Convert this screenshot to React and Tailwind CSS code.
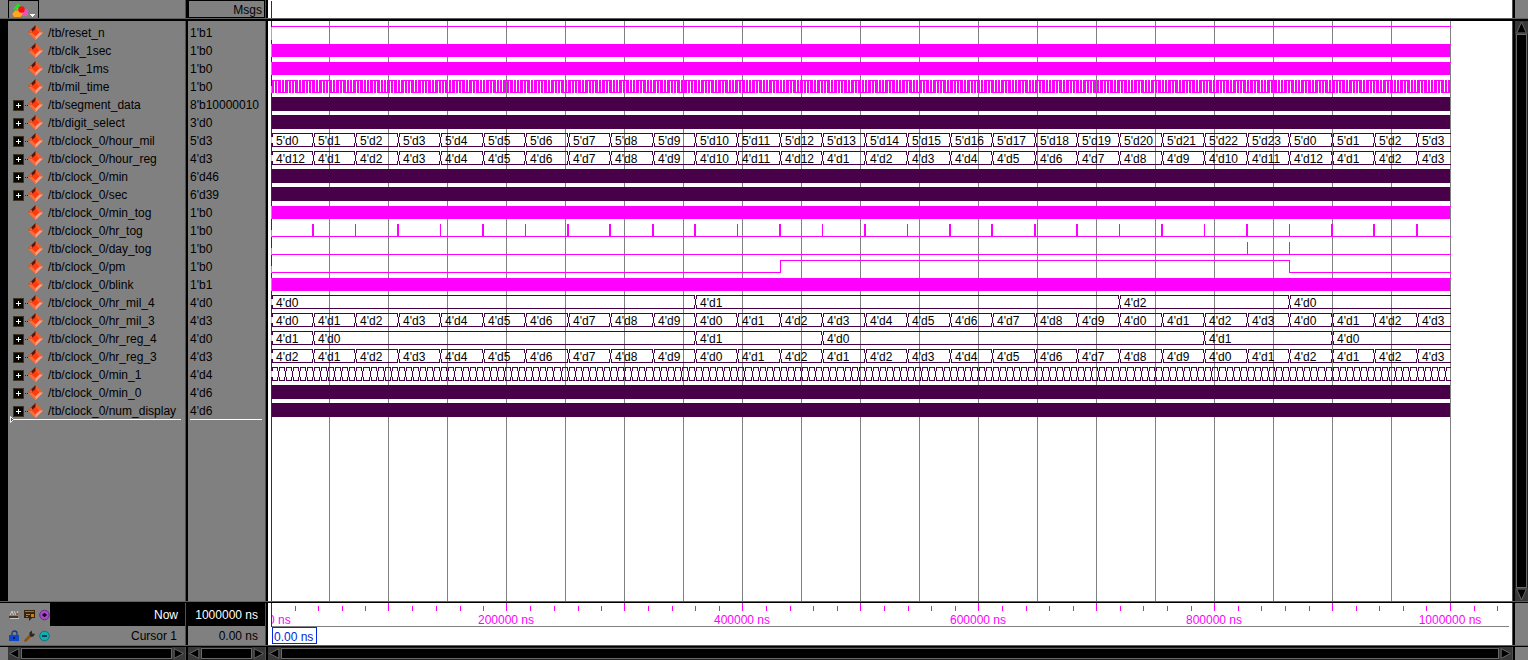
import React from "react";

const ORIGIN = 3;
const PX_PER_NS = 1179.05 / 1000000;
const END = 1000000;
const HOUR = 36000;
const xAt = (ns) => Math.floor(ORIGIN + ns * PX_PER_NS);
const box = (x, y, w, h) => `M${x} ${y}h${w}v${h}h${-w}z`;

const hours = Array.from({ length: 28 }, (_, k) => k);
const onHours = (fn) => hours.map((k) => [k * HOUR, fn(k)]);
const reg = (k) => ((k % 24) % 12 === 0 ? 12 : (k % 24) % 12);

const signals = [
  { name: "/tb/reset_n", value: "1'b1", kind: "high" },
  { name: "/tb/clk_1sec", value: "1'b0", kind: "clock" },
  { name: "/tb/clk_1ms", value: "1'b0", kind: "clock" },
  { name: "/tb/mil_time", value: "1'b0", kind: "toggle" },
  { name: "/tb/segment_data", value: "8'b10000010", kind: "dense" },
  { name: "/tb/digit_select", value: "3'd0", kind: "dense" },
  { name: "/tb/clock_0/hour_mil", value: "5'd3", kind: "bus", data: onHours((k) => `5'd${k % 24}`) },
  { name: "/tb/clock_0/hour_reg", value: "4'd3", kind: "bus", data: onHours((k) => `4'd${reg(k)}`) },
  { name: "/tb/clock_0/min", value: "6'd46", kind: "dense" },
  { name: "/tb/clock_0/sec", value: "6'd39", kind: "dense" },
  { name: "/tb/clock_0/min_tog", value: "1'b0", kind: "clock" },
  { name: "/tb/clock_0/hr_tog", value: "1'b0", kind: "pulses" },
  { name: "/tb/clock_0/day_tog", value: "1'b0", kind: "day" },
  { name: "/tb/clock_0/pm", value: "1'b0", kind: "pm" },
  { name: "/tb/clock_0/blink", value: "1'b1", kind: "clock" },
  {
    name: "/tb/clock_0/hr_mil_4", value: "4'd0", kind: "bus",
    data: [[0, "4'd0"], [10 * HOUR, "4'd1"], [20 * HOUR, "4'd2"], [24 * HOUR, "4'd0"]],
  },
  { name: "/tb/clock_0/hr_mil_3", value: "4'd3", kind: "bus", data: onHours((k) => `4'd${(k % 24) % 10}`) },
  {
    name: "/tb/clock_0/hr_reg_4", value: "4'd0", kind: "bus",
    data: [[0, "4'd1"], [HOUR, "4'd0"], [10 * HOUR, "4'd1"], [13 * HOUR, "4'd0"], [22 * HOUR, "4'd1"], [25 * HOUR, "4'd0"]],
  },
  { name: "/tb/clock_0/hr_reg_3", value: "4'd3", kind: "bus", data: onHours((k) => `4'd${reg(k) % 10}`) },
  {
    name: "/tb/clock_0/min_1", value: "4'd4", kind: "bus",
    data: Array.from({ length: 167 }, (_, k) => [k * 6000, ""]),
  },
  { name: "/tb/clock_0/min_0", value: "4'd6", kind: "dense" },
  { name: "/tb/clock_0/num_display", value: "4'd6", kind: "dense" },
];

const isBus = (s) => s.kind === "bus" || s.kind === "dense";

function busPath(data) {
  return data
    .map(([t], i) => {
      const a = xAt(t);
      const b = i + 1 < data.length ? xAt(data[i + 1][0]) : xAt(END) + 1;
      let d = box(a + 1, 1, b - a - 1, 1) + box(a + 1, 14, b - a - 1, 1);
      d += box(a + 1, 2, 1, 3) + box(a + 1, 11, 1, 3);
      if (i > 0) d += box(a, 5, 1, 6) + box(a - 1, 2, 1, 3) + box(a - 1, 11, 1, 3);
      return d;
    })
    .join("");
}

function togglePath() {
  const step = 1200;
  let d = "";
  for (let i = 0; i * step < END; i++) {
    const a = xAt(i * step);
    const b = xAt(Math.min((i + 1) * step, END));
    d += box(a, 2, 1, 13) + box(a, i % 2 ? 14 : 2, b - a, 1);
  }
  return d;
}

function pulsePath() {
  return hours
    .slice(1)
    .map((k) => {
      const x = ORIGIN + k * HOUR * PX_PER_NS;
      const wide = x - Math.floor(x) < 0.6;
      return wide ? box(Math.floor(x) - 1, 2, 2, 12) : box(Math.floor(x), 2, 1, 12);
    })
    .join("");
}

function wavePath(s) {
  const s0 = ORIGIN;
  const e = xAt(END);
  switch (s.kind) {
    case "high":
      return box(s0, 2, e - s0 + 1, 1);
    case "clock":
      return box(s0, 2, e - s0, 13) + box(e, 2, 1, 1);
    case "dense":
      return box(s0, 1, e - s0, 14);
    case "toggle":
      return togglePath();
    case "pulses":
      return box(s0, 14, e - s0 + 1, 1) + pulsePath();
    case "day":
      return box(s0, 14, e - s0 + 1, 1) + box(xAt(23 * HOUR), 2, 1, 12) + box(xAt(24 * HOUR), 2, 1, 12);
    case "pm": {
      const r = xAt(12 * HOUR);
      const f = xAt(24 * HOUR);
      return (
        box(s0, 14, r - s0, 1) + box(r, 2, 1, 13) + box(r, 2, f - r, 1) + box(f, 2, 1, 13) + box(f, 14, e - f + 1, 1)
      );
    }
    default:
      return busPath(s.data);
  }
}

function cursorMark(s) {
  if (s.kind === "bus") return ["#b8e060", 5, 6];
  if (s.kind === "dense") return null;
  if (s.kind === "high") return ["#20e0ff", 3, 13];
  if (s.kind === "clock") return ["#20d0ff", 2, 13];
  return ["#20d0ff", 8, 7];
}

function WaveRow({ signal }) {
  const mark = cursorMark(signal);
  return (
    <svg className="block h-[18px] w-full" role="img" aria-label={signal.name} overflow="hidden">
      <path d={wavePath(signal)} fill={isBus(signal) ? "#480048" : "#ff00ff"} shapeRendering="crispEdges" />
      <rect x="3" y="0" width="1" height="18" fill="#0028e0" shapeRendering="crispEdges" />
      {mark && <rect x="3" y={mark[1]} width="1" height={mark[2]} fill={mark[0]} shapeRendering="crispEdges" />}
      {signal.kind === "bus" &&
        signal.data.map(([t, label], i) =>
          label ? (
            <text key={i} x={xAt(t) + 5} y="13" fontSize="12" fill="#000">
              {label}
            </text>
          ) : null
        )}
    </svg>
  );
}

function Diamond() {
  return (
    <svg className="mt-px h-[15px] w-[15px] shrink-0" viewBox="0 0 15 15" aria-hidden="true">
      <path d="M7.5 0 15 7.5H7.5z" fill="#f0602c" />
      <path d="M7.5 0 0 7.5h7.5z" fill="#5c1408" />
      <path d="M0 7.5 7.5 15V7.5z" fill="#f47038" />
      <path d="M15 7.5 7.5 15V7.5z" fill="#ffa088" />
      <path d="M0 7.5 3.200 4.300 5 7.500z" fill="#f06030" />
      <path d="M7.5 3.7 11.3 7.500 7.500 11.300 3.700 7.500z" fill="#ff3c10" />
    </svg>
  );
}

function Expander({ name }) {
  return (
    <button type="button" aria-label={`Expand ${name}`} className="mt-1 h-[11px] w-[15px] shrink-0">
      <svg className="block h-[11px] w-[15px]" viewBox="0 0 15 11" shapeRendering="crispEdges" aria-hidden="true">
        <path d="M0 0h11v11H0z" fill="#3c3420" />
        <path d="M1 1h9v9H1z" fill="#080600" />
        <path d="M5 3h1v5H5zM3 5h5v1H3z" fill="#fff" />
        <path d="M12 5h1v1h-1zM14 5h1v1h-1z" fill="#222" />
      </svg>
    </button>
  );
}

const arrows = {
  left: "M10 1.5 1.5 6 10 10.5z",
  right: "M2 1.5 10.5 6 2 10.5z",
  up: "M6 1 10.5 11h-9z",
  down: "M6 11 1.5 1h9z",
};

function Arrow({ dir, label }) {
  return (
    <button type="button" aria-label={label} className="h-[13px] w-[13px] shrink-0 bg-[#383838]">
      <svg className="block h-[13px] w-[13px]" viewBox="0 0 12 12" aria-hidden="true">
        <path d={arrows[dir]} fill="#000" stroke="#707070" strokeWidth=".8" />
      </svg>
    </button>
  );
}

function HScroll({ label }) {
  return (
    <div className="flex h-[13px] min-w-0 bg-[#202020]">
      <Arrow dir="left" label={`Scroll ${label} left`} />
      <div className="my-px min-w-0 flex-1 border border-[#686868] bg-black" />
      <Arrow dir="right" label={`Scroll ${label} right`} />
    </div>
  );
}

function ShapesIcon() {
  return (
    <svg className="h-[15px] w-[18px]" viewBox="0 0 18 15" aria-hidden="true">
      <path d="M9 6h7v7H9z" fill="#f050b8" />
      <path d="M6 0 11 6.500H.5z" fill="#20e020" />
      <path d="M5.500 4.500 7 6.500H4z" fill="#b0a890" />
      <path d="M3 7.500h5l3 3L8.500 14H2L.3 11z" fill="#ffa818" />
      <circle cx="9.500" cy="6.500" r="3.200" fill="#f81010" />
    </svg>
  );
}

function StatusIcons({ row }) {
  if (row === "now") {
    return (
      <div className="flex items-center gap-1">
        <svg className="h-3 w-[11px]" viewBox="0 0 11 12" aria-hidden="true">
          <path d="M1 6 3 2l1.500 4M5 2l2 4 2-4" fill="none" stroke="#d8c8c0" strokeWidth="1" />
          <path d="M0 7h9v2H0z" fill="#403830" />
          <path d="M1 9h9v1H1z" fill="#c8c8c8" />
          <path d="M7 4h2v2H7z" fill="#a06030" />
        </svg>
        <svg className="h-3 w-[11px]" viewBox="0 0 11 12" aria-hidden="true">
          <path d="M0 1h11v8H8l-3 3V9H0z" fill="#3c2408" />
          <path d="M1 2h9v1H1z" fill="#a87028" />
          <path d="M2 5h4v1H2zM2 7h2v1H2z" fill="#a08060" />
          <path d="M7 5h3v3H7z" fill="#c08020" />
        </svg>
        <svg className="h-3 w-[11px]" viewBox="0 0 11 12" aria-hidden="true">
          <circle cx="5.500" cy="6" r="4.800" fill="#a848c8" stroke="#602080" strokeWidth=".8" />
          <path d="M3.500 6h4M5.500 4v4" stroke="#180020" strokeWidth="1.800" />
        </svg>
      </div>
    );
  }
  return (
    <div className="flex items-center gap-1">
      <svg className="h-3 w-[11px]" viewBox="0 0 11 12" aria-hidden="true">
        <path d="M3 6V3.500q0-2.500 2.500-2.500T8 3.500V6" fill="none" stroke="#183880" strokeWidth="1.300" />
        <path d="M0 5h10v6H0z" fill="#0c48c8" />
        <path d="M4 7h2v2H4z" fill="#001860" />
      </svg>
      <svg className="h-3 w-[11px]" viewBox="0 0 11 12" aria-hidden="true">
        <path d="M1.500 10.500 6.500 5.500" stroke="#8c5010" strokeWidth="2.600" strokeLinecap="round" />
        <path d="M5.500 5V2.500L8 .5v2.500l.8.7H11L9.500 6.500 7 7z" fill="#302820" />
      </svg>
      <svg className="h-3 w-[11px]" viewBox="0 0 11 12" aria-hidden="true">
        <circle cx="5.500" cy="6" r="4.800" fill="#10b0b0" stroke="#086878" strokeWidth=".8" />
        <path d="M3 6h5" stroke="#002830" strokeWidth="1.600" />
      </svg>
    </div>
  );
}

function Ruler() {
  const ticks = Array.from({ length: 53 }, (_, i) => i).slice(1);
  return (
    <svg className="block h-[42px] w-full" role="img" aria-label="Time ruler" overflow="hidden">
      <g shapeRendering="crispEdges">
        {ticks.map((i) => {
          const major = i % 5 === 0;
          return (
            <rect
              key={i}
              x={major ? xAt(i * 20000) : Math.round(ORIGIN + i * 20000 * PX_PER_NS)}
              y={major ? 0 : 3}
              width="1"
              height={major ? 8 : 5}
              fill="#ff00ff"
            />
          );
        })}
        <rect x="3" y="23" width="1238" height="1" fill="#808080" />
      </g>
      <text x="0" y="21" fontSize="12" fill="#ff00ff">
        0 ns
      </text>
      <rect x="0" y="0" width="3" height="23" fill="#fff" />
      <rect x="3" y="0" width="1" height="24" fill="#0028e0" shapeRendering="crispEdges" />
      {[200000, 400000, 600000, 800000, 1000000].map((t) => (
        <text key={t} x={xAt(t)} y="21" fontSize="12" textAnchor="middle" fill="#ff00ff">
          {t} ns
        </text>
      ))}
      <rect x="4" y="24" width="45" height="17" fill="#0028e0" shapeRendering="crispEdges" />
      <rect x="5" y="25" width="43" height="15" fill="#fff" shapeRendering="crispEdges" />
      <text x="6" y="38" fontSize="12" fill="#0028e0">
        0.00 ns
      </text>
    </svg>
  );
}

function HRule() {
  return <div className="col-span-full border-t border-[#606060] bg-black" />;
}

function VRule() {
  return <div className="border-l border-[#505050] bg-black" />;
}

export default function App() {
  return (
    <main className="grid h-screen min-h-[480px] w-full grid-cols-[185px_3px_77px_3px_minmax(0,1fr)_3px_13px] grid-rows-[18px_3px_minmax(400px,1fr)_2px_42px_2px_13px] overflow-hidden bg-[#808080] font-['Liberation_Sans',Arial,sans-serif] text-[12px] leading-[18px] text-black">
      <div className="pl-2">
        <button
          type="button"
          aria-label="Display options"
          className="flex h-[18px] w-[31px] items-end border border-b-0 border-black pl-[3px]"
        >
          <ShapesIcon />
          <svg className="mb-px h-[3px] w-[5px]" viewBox="0 0 5 3" shapeRendering="crispEdges" aria-hidden="true">
            <path d="M0 0h5v1H4v1H3v1H2V2H1V1H0z" fill="#fff" />
          </svg>
        </button>
      </div>
      <VRule />
      <div className="border border-black pr-[2px] text-right">Msgs</div>
      <VRule />
      <svg className="block h-full w-full bg-white" aria-hidden="true">
        <rect x="3" y="1" width="1" height="17" fill="#0028e0" shapeRendering="crispEdges" />
      </svg>
      <VRule />
      <div />

      <HRule />

      <div className="border-l-8 border-black pt-[3px]">
        <ul className="relative">
          {signals.map((s) => (
            <li key={s.name} className="flex h-[18px] whitespace-nowrap pl-[5px]">
              {isBus(s) ? <Expander name={s.name} /> : <span className="w-[15px] shrink-0" />}
              <Diamond />
              <span className="pl-[5px]">{s.name}</span>
            </li>
          ))}
          <li aria-hidden="true" className="absolute bottom-0 left-[5px] right-1 h-px bg-white" />
          <li aria-hidden="true" className="absolute -bottom-[3px] left-[2px] h-[7px] w-1">
            <svg className="block h-[7px] w-1" viewBox="0 0 4 7">
              <path d="M.5.5v6l3-3z" fill="#505050" stroke="#fff" strokeWidth=".9" />
            </svg>
          </li>
        </ul>
      </div>
      <VRule />
      <div className="pt-[3px]">
        <ul className="relative">
          {signals.map((s) => (
            <li key={s.name} className="h-[18px] whitespace-nowrap pl-[2px]">
              {s.value}
            </li>
          ))}
          <li aria-hidden="true" className="absolute bottom-0 left-[2px] right-[3px] h-px bg-white" />
        </ul>
      </div>
      <VRule />
      <div className="relative overflow-hidden bg-white pt-[3px]">
        <svg className="absolute inset-0 h-full w-full" aria-hidden="true" shapeRendering="crispEdges">
          {Array.from({ length: 20 }, (_, i) => (
            <rect key={i} x={xAt((i + 1) * 50000)} y="0" width="1" height="100%" fill="#808080" />
          ))}
          <rect x="3" y="0" width="1" height="100%" fill="#0028e0" />
        </svg>
        <div className="relative">
          {signals.map((s) => (
            <WaveRow key={s.name} signal={s} />
          ))}
        </div>
      </div>
      <VRule />
      <div className="flex flex-col bg-[#202020]">
        <Arrow dir="up" label="Scroll up" />
        <div className="mx-px flex-1 border border-[#686868] bg-black" />
        <Arrow dir="down" label="Scroll down" />
      </div>

      <HRule />

      <div className="flex flex-col text-right">
        <div className="flex h-[23px] items-center bg-[#808080]">
          <div className="w-[50px] pl-[9px]">
            <StatusIcons row="now" />
          </div>
          <div className="h-[23px] flex-1 bg-black pr-[7px] leading-[24px] text-white">Now</div>
        </div>
        <div className="flex h-[19px] items-center">
          <div className="w-[50px] pl-[9px]">
            <StatusIcons row="cursor" />
          </div>
          <div className="flex-1 pr-2 leading-[20px]">Cursor 1</div>
        </div>
      </div>
      <VRule />
      <div className="text-right">
        <div className="h-[23px] bg-black pr-[7px] leading-[24px] text-white">1000000 ns</div>
        <div className="pr-[7px] leading-[20px]">0.00 ns</div>
      </div>
      <VRule />
      <div className="bg-white">
        <Ruler />
      </div>
      <VRule />
      <div />

      <HRule />

      <div className="pl-2">
        <HScroll label="names" />
      </div>
      <VRule />
      <HScroll label="values" />
      <VRule />
      <HScroll label="waves" />
      <VRule />
      <div />
    </main>
  );
}
